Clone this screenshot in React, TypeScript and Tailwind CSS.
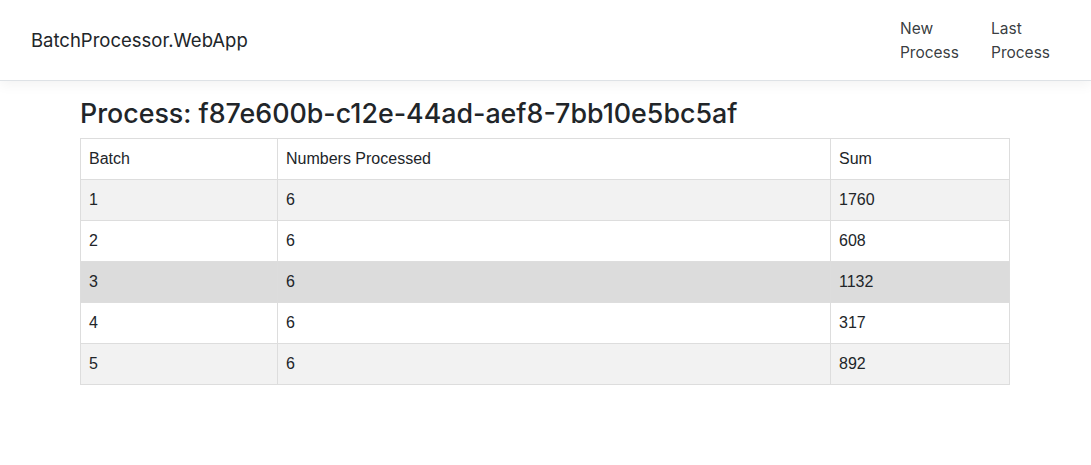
const rows = [
  { batch: 1, count: 6, sum: 1760 },
  { batch: 2, count: 6, sum: 608 },
  { batch: 3, count: 6, sum: 1132 },
  { batch: 4, count: 6, sum: 317 },
  { batch: 5, count: 6, sum: 892 },
]

export default function App() {
  return (
    <div className="min-h-[465px] bg-white text-[#212529] font-['Inter',sans-serif]">
      <header className="h-[81px] flex items-center justify-between pl-[31px] pr-[25px] border-b border-[#dee2e6] shadow-[0_4px_12px_rgba(0,0,0,0.05)]">
        <a className="text-[18.5px] leading-none text-[#212529]">BatchProcessor.WebApp</a>
        <nav className="flex pt-[2px] text-[15.5px] leading-6 text-[#212529]/90">
          <a className="px-4 w-min">New Process</a>
          <a className="px-4 w-min">Last Process</a>
        </nav>
      </header>
      <main className="w-[930px] ml-[80px] pt-[16px]">
        <h3 className="text-[26.8px] leading-[33px] font-medium mb-[8px]">
          Process: f87e600b-c12e-44ad-aef8-7bb10e5bc5af
        </h3>
        <table className="w-full border-collapse border border-[#dddddd] text-[16px] font-['Liberation_Sans',Arial,sans-serif] text-[#212529]">
          <thead>
            <tr className="h-[41px]">
              <th className="w-[197px] border border-[#dddddd] px-2 text-left font-normal">Batch</th>
              <th className="w-[553px] border border-[#dddddd] px-2 text-left font-normal">Numbers Processed</th>
              <th className="border border-[#dddddd] px-2 text-left font-normal">Sum</th>
            </tr>
          </thead>
          <tbody>
            {rows.map((r) => (
              <tr
                key={r.batch}
                className={`h-[41px] ${r.batch === 3 ? 'bg-[#dcdcdc]' : r.batch % 2 === 1 ? 'bg-[#f2f2f2]' : 'bg-white'}`}
              >
                <td className="border border-[#dddddd] px-2">{r.batch}</td>
                <td className="border border-[#dddddd] px-2">{r.count}</td>
                <td className="border border-[#dddddd] px-2">{r.sum}</td>
              </tr>
            ))}
          </tbody>
        </table>
      </main>
    </div>
  )
}
